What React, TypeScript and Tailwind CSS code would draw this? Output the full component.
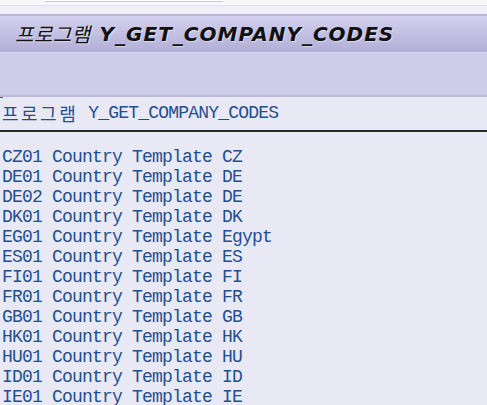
import React from "react";

const rows: [string, string][] = [
  ["CZ01", "CZ"],
  ["DE01", "DE"],
  ["DE02", "DE"],
  ["DK01", "DK"],
  ["EG01", "Egypt"],
  ["ES01", "ES"],
  ["FI01", "FI"],
  ["FR01", "FR"],
  ["GB01", "GB"],
  ["HK01", "HK"],
  ["HU01", "HU"],
  ["ID01", "ID"],
  ["IE01", "IE"],
];

const mono = "font-['Liberation_Mono','DejaVu_Sans_Mono',monospace] text-[18px] tracking-[-0.8px]";

export default function App() {
  return (
    <div className="w-[487px] h-[405px] overflow-hidden bg-[#e9e9f5] flex flex-col">
      {/* top strip */}
      <div className="h-[5px] bg-[#f7f7fb] relative shrink-0">
        <div className="absolute left-[45px] w-[178px] top-0 h-[2px] border-b border-[#c9c9d6] bg-white" />
      </div>
      <div className="h-[9px] bg-[#efeef7] border-t border-[#e2e1ee] shrink-0" />
      <div className="h-[2px] bg-[#b9b5d6] shrink-0" />
      {/* title bar */}
      <div className="h-[37px] shrink-0 bg-gradient-to-b from-[#d3d1ee] to-[#b2aed7] flex items-center pl-[15px] border-b border-[#d6d4ee]">
        <span
          className="italic text-[20px] text-[#111] font-['Noto_Sans_CJK_KR',sans-serif] tracking-[0.5px] mr-[9px]"
          style={{ textShadow: "1px 1px 1px rgba(255,255,255,0.5)" }}
        >
          프로그램
        </span>
        <span
          className="italic font-bold text-[20px] text-[#111] font-['DejaVu_Sans',sans-serif] tracking-[1px]"
          style={{ textShadow: "1px 1px 1px rgba(255,255,255,0.5)" }}
        >
          Y_GET_COMPANY_CODES
        </span>
      </div>
      {/* toolbar */}
      <div className="h-[42px] shrink-0 bg-[#cecde9]" />
      <div className="h-[2px] shrink-0 bg-[#bcb9d9]" />
      {/* content header */}
      <div className="h-[35px] shrink-0 relative flex items-center pl-[2px] text-[#1f4f8e] border-b-2 border-[#2a2a2a]">
        <div className="absolute left-0 top-0 w-[3px] h-[1px] bg-[#d02020]" />
        <span className="font-['Noto_Sans_CJK_KR',sans-serif] text-[18px] tracking-[2.5px]">프로그램</span>
        <span className={mono + " whitespace-pre"}> Y_GET_COMPANY_CODES</span>
      </div>
      {/* list */}
      <div className="flex flex-col pt-[15px] pl-[2px] text-[#1f4f8e]">
        {rows.map(([code, name]) => (
          <div key={code} className={mono + " h-[20px] leading-[20px] whitespace-pre"}>
            {code} Country Template {name}
          </div>
        ))}
      </div>
    </div>
  );
}
